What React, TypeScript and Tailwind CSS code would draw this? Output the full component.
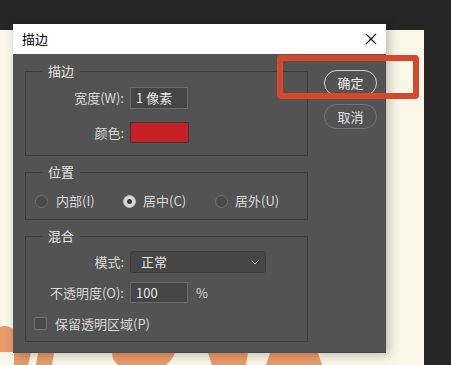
import React from "react";

const font = { fontFamily: '"Noto Sans CJK SC", "Noto Sans", sans-serif' };

const Radio = ({ checked }: { checked?: boolean }) =>
  checked ? (
    <span className="w-[13px] h-[13px] rounded-full bg-[#d9d9d9] border border-[#bdbdbd] flex items-center justify-center">
      <span className="w-[5px] h-[5px] rounded-full bg-[#3a3a3a]" />
    </span>
  ) : (
    <span className="w-[13px] h-[13px] rounded-full bg-[#4a4a4a] border border-[#707070]" />
  );

const App = () => {
  return (
    <div className="w-[451px] h-[365px] bg-[#262626] relative overflow-hidden text-[13px]" style={font}>
      {/* canvas */}
      <div className="absolute left-0 top-[30px] w-[424px] h-[335px] bg-[#f9f7e7]">
        <svg width="424" height="335" className="absolute left-0 top-0">
          <path d="M0 297 Q8 294 14 300 L14 322 L0 322 Z" fill="#e89b68" />
          <path d="M14 323 L31 323 L28 335 L14 335 Z" fill="#e89b68" />
          <path d="M38 323 L54 323 L52 335 L36 335 Z" fill="#e89b68" />
          <path d="M112 323 L175 323 Q172 330 166 335 L118 335 Q112 330 112 323 Z" fill="#e89b68" />
          <path d="M208 323 L248 323 L246 335 L212 335 Z" fill="#e89b68" />
          <path d="M270 323 L318 323 L322 335 L266 335 Z" fill="#e89b68" />
        </svg>
      </div>

      {/* dialog */}
      <div className="absolute left-[13px] top-[24px] w-[373px] h-[329px] flex flex-col shadow-[3px_2px_10px_rgba(0,0,0,0.25)]">
        <div className="h-[30px] bg-white flex items-center justify-between pl-[9px] pr-[9px] text-black text-[13px]">
          <span>描边</span>
          <svg width="12" height="12" viewBox="0 0 12 12">
            <path d="M1 1 L11 11 M11 1 L1 11" stroke="#111" strokeWidth="1.2" />
          </svg>
        </div>
        <div className="flex-1 bg-[#535353] border-r border-b border-[#4a4a4a] flex pl-[12px] pt-[8px] text-[#d8d8d8]">
          <div className="w-[283px] flex flex-col gap-[7px]">
            <fieldset className="h-[94px] border border-[#3d3d3d] pl-0">
              <legend className="ml-[16px] px-[6px] leading-[18px] text-[13px] text-[#e6e6e6]">描边</legend>
              <div className="mt-[7px] flex flex-col gap-[13px]">
                <div className="flex items-center gap-[6px]">
                  <span className="w-[98px] text-right">宽度(W):</span>
                  <div className="w-[58px] h-[22px] bg-[#454545] border border-[#6b6b6b] pl-[5px] leading-[20px] text-[#e6e6e6]">1 像素</div>
                </div>
                <div className="flex items-center gap-[6px]">
                  <span className="w-[98px] text-right">颜色:</span>
                  <div className="w-[59px] h-[21px] bg-[#c42126] border border-[#3a3a3a]" />
                </div>
              </div>
            </fieldset>

            <fieldset className="h-[57px] border border-[#3d3d3d]">
              <legend className="ml-[16px] px-[6px] leading-[18px] text-[13px] text-[#e6e6e6]">位置</legend>
              <div className="mt-[12px] flex items-center pl-[9px] h-[16px]">
                <div className="flex items-center gap-[8px] w-[88px]">
                  <Radio />
                  <span>内部(I)</span>
                </div>
                <div className="flex items-center gap-[7px] w-[92px]">
                  <Radio checked />
                  <span>居中(C)</span>
                </div>
                <div className="flex items-center gap-[7px]">
                  <Radio />
                  <span>居外(U)</span>
                </div>
              </div>
            </fieldset>

            <fieldset className="h-[115px] border border-[#3d3d3d]">
              <legend className="ml-[16px] px-[6px] leading-[18px] text-[13px] text-[#e6e6e6]">混合</legend>
              <div className="mt-[6px] flex flex-col">
                <div className="flex items-center gap-[6px]">
                  <span className="w-[98px] text-right">模式:</span>
                  <div className="w-[136px] h-[22px] bg-[#464646] border border-[#3b3b3b] rounded-[3px] flex items-center justify-between pl-[10px] pr-[6px] text-[#e6e6e6]">
                    <span>正常</span>
                    <svg width="8" height="5" viewBox="0 0 8 5">
                      <path d="M0.5 0.5 L4 4 L7.5 0.5" fill="none" stroke="#bdbdbd" strokeWidth="1" />
                    </svg>
                  </div>
                </div>
                <div className="mt-[9px] flex items-center gap-[6px]">
                  <span className="w-[98px] text-right">不透明度(O):</span>
                  <div className="w-[58px] h-[21px] bg-[#454545] border border-[#6b6b6b] pl-[5px] leading-[19px] text-[#e6e6e6]">100</div>
                  <span className="ml-[2px] text-[#cfd8e0]">%</span>
                </div>
                <div className="mt-[11px] flex items-center gap-[8px] pl-[8px]">
                  <span className="w-[13px] h-[13px] rounded-[2px] bg-[#4a4a4a] border border-[#707070]" />
                  <span>保留透明区域(P)</span>
                </div>
              </div>
            </fieldset>
          </div>

          <div className="ml-[16px] mt-[8px] flex flex-col gap-[8px]">
            <button className="w-[53px] h-[26px] rounded-full border border-[#d0d0d0] text-[#ececec] text-[13px]">确定</button>
            <button className="w-[53px] h-[25px] rounded-full border border-[#767676] text-[#e0e0e0] text-[13px]">取消</button>
          </div>
        </div>
      </div>

      {/* annotation */}
      <div className="absolute left-[277px] top-[55px] w-[142px] h-[44px] border-[6px] border-[#d7472b] rounded-[4px]" />
    </div>
  );
};

export default App;
